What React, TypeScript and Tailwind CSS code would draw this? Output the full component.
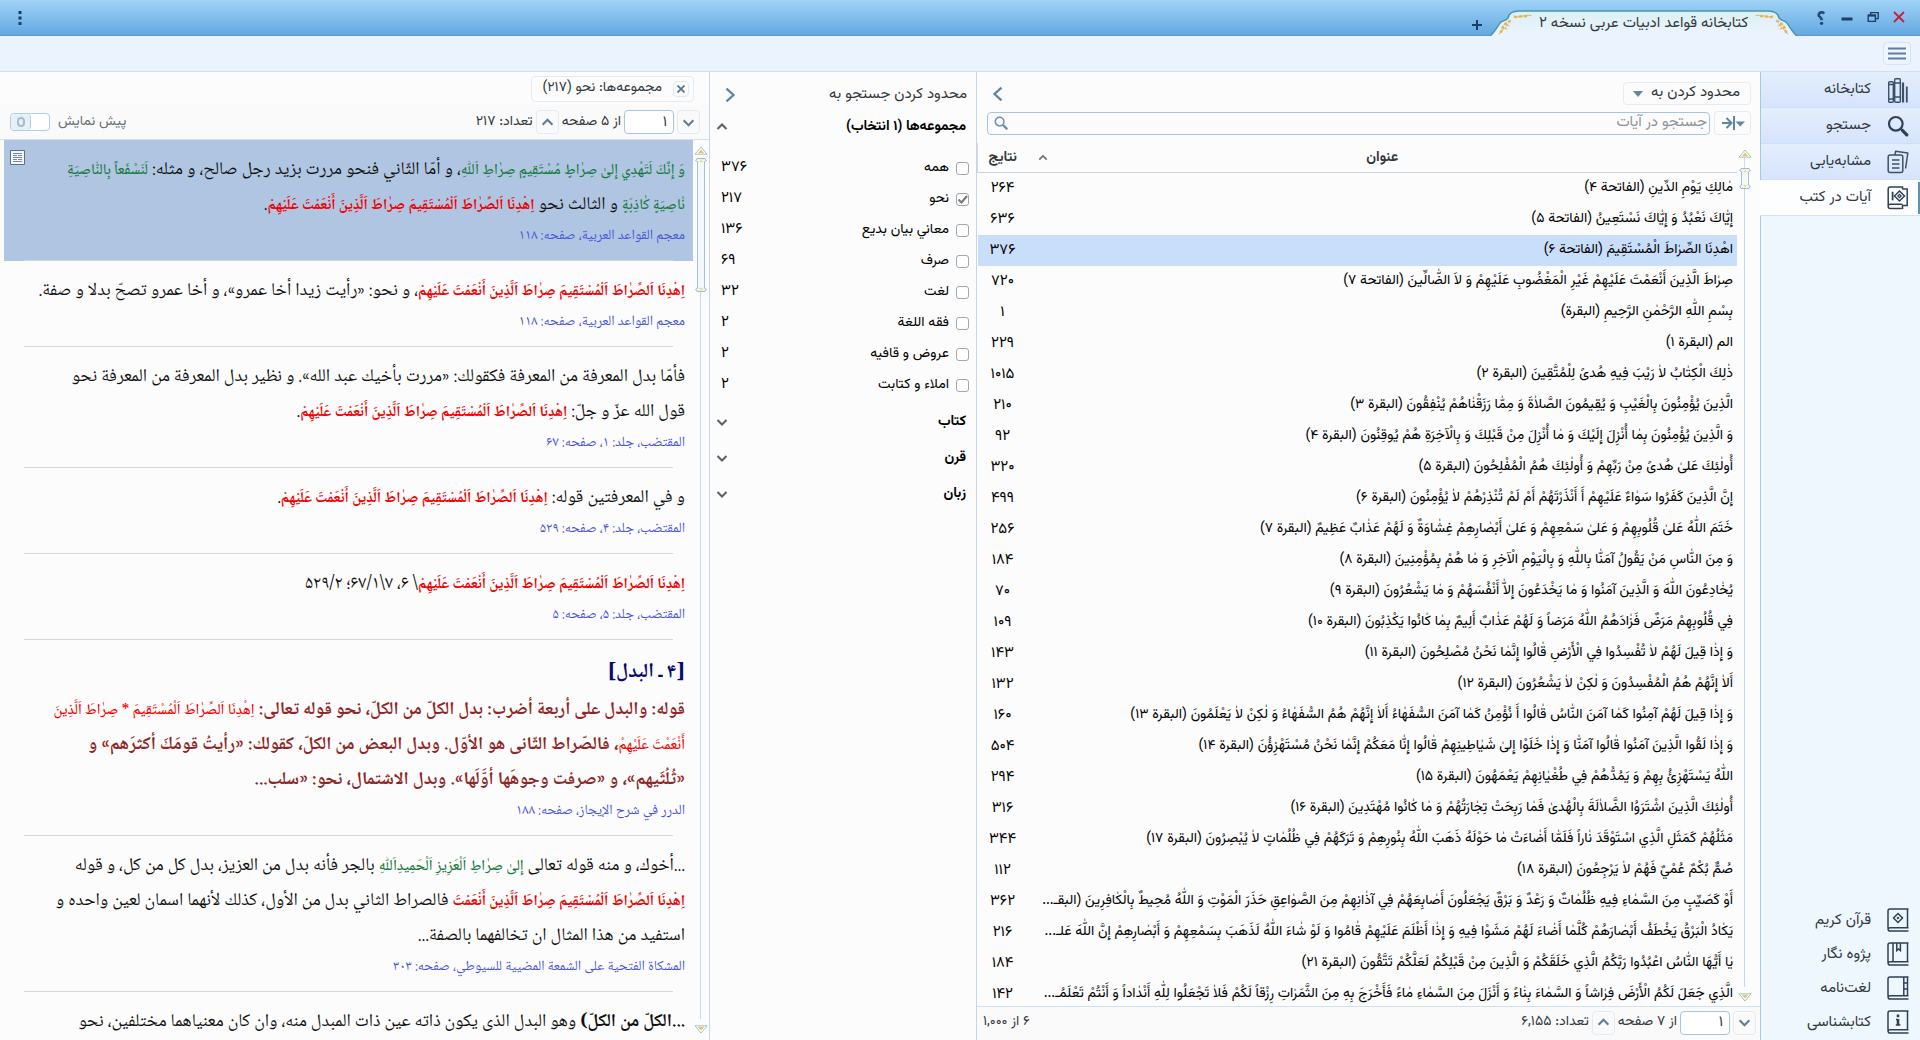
import React from 'react';

const FONT = "font-['Vazirmatn','Noto_Sans_Arabic','DejaVu_Sans',sans-serif]";
const NASKH = "font-['Noto_Naskh_Arabic','DejaVu_Sans',serif]";

type Part = { t: string; k?: 'red' | 'green' | 'bold' | 'redlight' };
type Line = { parts: Part[]; tone?: 'heading' | 'brown' };
type Result = { lines: Line[]; source: string; selected?: boolean };

const AYAH = 'اِهْدِنَا اَلصِّرٰاطَ اَلْمُسْتَقِيمَ صِرٰاطَ اَلَّذِينَ أَنْعَمْتَ عَلَيْهِمْ';

const results: Result[] = [
  {
    selected: true,
    lines: [
      {
        parts: [
          { t: 'وَ إِنَّكَ لَتَهْدِي إِلىٰ صِرٰاطٍ مُسْتَقِيمٍ صِرٰاطِ اَللّٰهِ', k: 'green' },
          { t: '، و أمّا الثّاني فنحو مررت بزيد رجل صالح، و مثله: ' },
          { t: 'لَنَسْفَعاً بِالنّٰاصِيَةِ', k: 'green' },
        ],
      },
      {
        parts: [
          { t: 'نٰاصِيَةٍ كٰاذِبَةٍ', k: 'green' },
          { t: ' و الثالث نحو ' },
          { t: AYAH, k: 'red' },
          { t: '.' },
        ],
      },
    ],
    source: 'معجم القواعد العربية، صفحه: ۱۱۸',
  },
  {
    lines: [
      {
        parts: [
          { t: AYAH, k: 'red' },
          { t: '، و نحو: «رأيت زيدا أخا عمرو»، و أخا عمرو تصحّ بدلا و صفة.' },
        ],
      },
    ],
    source: 'معجم القواعد العربية، صفحه: ۱۱۸',
  },
  {
    lines: [
      { parts: [{ t: 'فأمّا بدل المعرفة من المعرفة فكقولك: «مررت بأخيك عبد الله». و نظير بدل المعرفة من المعرفة نحو' }] },
      { parts: [{ t: 'قول الله عزّ و جلّ: ' }, { t: AYAH, k: 'red' }, { t: '.' }] },
    ],
    source: 'المقتضب، جلد: ۱، صفحه: ۶۷',
  },
  {
    lines: [{ parts: [{ t: 'و في المعرفتين قوله: ' }, { t: AYAH, k: 'red' }, { t: '.' }] }],
    source: 'المقتضب، جلد: ۴، صفحه: ۵۲۹',
  },
  {
    lines: [{ parts: [{ t: AYAH, k: 'red' }, { t: '\\ ۶، ۷\\۶۷/۱؛ ۵۲۹/۲' }] }],
    source: 'المقتضب، جلد: ۵، صفحه: ۵',
  },
  {
    lines: [
      { tone: 'heading', parts: [{ t: '[۴ ـ البدل]' }] },
      {
        tone: 'brown',
        parts: [
          { t: 'قوله: والبدل على أربعة أضرب: بدل الكلّ من الكلّ، نحو قوله تعالى: ' },
          { t: 'اِهْدِنَا اَلصِّرٰاطَ اَلْمُسْتَقِيمَ * صِرٰاطَ اَلَّذِينَ', k: 'redlight' },
        ],
      },
      {
        tone: 'brown',
        parts: [
          { t: 'أَنْعَمْتَ عَلَيْهِمْ', k: 'redlight' },
          { t: '، فالصّراط الثّانى هو الأوّل. وبدل البعض من الكلّ، كقولك: «رأيتُ قومَكَ أكثرَهم» و' },
        ],
      },
      {
        tone: 'brown',
        parts: [{ t: '«ثُلُثَيهم»، و «صرفت وجوهَها أوَّلَها». وبدل الاشتمال، نحو: «سلب...' }],
      },
    ],
    source: 'الدرر في شرح الإيجاز، صفحه: ۱۸۸',
  },
  {
    lines: [
      {
        parts: [
          { t: '...أخوك، و منه قوله تعالى ' },
          { t: 'إِلىٰ صِرٰاطِ اَلْعَزِيزِ اَلْحَمِيدِاَللّٰهِ', k: 'green' },
          { t: ' بالجر فأنه بدل من العزيز، بدل كل من كل، و قوله' },
        ],
      },
      {
        parts: [
          { t: 'اِهْدِنَا اَلصِّرٰاطَ اَلْمُسْتَقِيمَ صِرٰاطَ اَلَّذِينَ أَنْعَمْتَ', k: 'red' },
          { t: ' فالصراط الثاني بدل من الأول، كذلك لأنهما اسمان لعين واحده و' },
        ],
      },
      { parts: [{ t: 'استفيد من هذا المثال ان تخالفهما بالصفة...' }] },
    ],
    source: 'المشكاة الفتحية على الشمعة المضيية للسيوطي، صفحه: ۳۰۳',
  },
  {
    lines: [
      {
        parts: [
          { t: '...الكلّ من الكلّ)', k: 'bold' },
          { t: ' وهو البدل الذى يكون ذاته عين ذات المبدل منه، وان كان معنياهما مختلفين، نحو' },
        ],
      },
    ],
    source: '',
  },
];

const verses: [string, string][] = [
  ['مٰالِكِ يَوْمِ الدِّينِ (الفاتحة ۴)', '۲۶۴'],
  ['إِيّٰاكَ نَعْبُدُ وَ إِيّٰاكَ نَسْتَعِينُ (الفاتحة ۵)', '۶۳۶'],
  ['اهْدِنَا الصِّرٰاطَ الْمُسْتَقِيمَ (الفاتحة ۶)', '۳۷۶'],
  ['صِرٰاطَ الَّذِينَ أَنْعَمْتَ عَلَيْهِمْ غَيْرِ الْمَغْضُوبِ عَلَيْهِمْ وَ لاَ الضّٰالِّينَ (الفاتحة ۷)', '۷۲۰'],
  ['بِسْمِ اللّٰهِ الرَّحْمٰنِ الرَّحِيمِ (البقرة)', '۱'],
  ['الم (البقرة ۱)', '۲۲۹'],
  ['ذٰلِكَ الْكِتٰابُ لاٰ رَيْبَ فِيهِ هُدىً لِلْمُتَّقِينَ (البقرة ۲)', '۱۰۱۵'],
  ['الَّذِينَ يُؤْمِنُونَ بِالْغَيْبِ وَ يُقِيمُونَ الصَّلاٰةَ وَ مِمّٰا رَزَقْنٰاهُمْ يُنْفِقُونَ (البقرة ۳)', '۲۱۰'],
  ['وَ الَّذِينَ يُؤْمِنُونَ بِمٰا أُنْزِلَ إِلَيْكَ وَ مٰا أُنْزِلَ مِنْ قَبْلِكَ وَ بِالْآخِرَةِ هُمْ يُوقِنُونَ (البقرة ۴)', '۹۲'],
  ['أُولٰئِكَ عَلىٰ هُدىً مِنْ رَبِّهِمْ وَ أُولٰئِكَ هُمُ الْمُفْلِحُونَ (البقرة ۵)', '۳۲۰'],
  ['إِنَّ الَّذِينَ كَفَرُوا سَوٰاءٌ عَلَيْهِمْ أَ أَنْذَرْتَهُمْ أَمْ لَمْ تُنْذِرْهُمْ لاٰ يُؤْمِنُونَ (البقرة ۶)', '۴۹۹'],
  ['خَتَمَ اللّٰهُ عَلىٰ قُلُوبِهِمْ وَ عَلىٰ سَمْعِهِمْ وَ عَلىٰ أَبْصٰارِهِمْ غِشٰاوَةٌ وَ لَهُمْ عَذٰابٌ عَظِيمٌ (البقرة ۷)', '۲۵۶'],
  ['وَ مِنَ النّٰاسِ مَنْ يَقُولُ آمَنّٰا بِاللّٰهِ وَ بِالْيَوْمِ الْآخِرِ وَ مٰا هُمْ بِمُؤْمِنِينَ (البقرة ۸)', '۱۸۴'],
  ['يُخٰادِعُونَ اللّٰهَ وَ الَّذِينَ آمَنُوا وَ مٰا يَخْدَعُونَ إِلاّٰ أَنْفُسَهُمْ وَ مٰا يَشْعُرُونَ (البقرة ۹)', '۷۰'],
  ['فِي قُلُوبِهِمْ مَرَضٌ فَزٰادَهُمُ اللّٰهُ مَرَضاً وَ لَهُمْ عَذٰابٌ أَلِيمٌ بِمٰا كٰانُوا يَكْذِبُونَ (البقرة ۱۰)', '۱۰۹'],
  ['وَ إِذٰا قِيلَ لَهُمْ لاٰ تُفْسِدُوا فِي الْأَرْضِ قٰالُوا إِنَّمٰا نَحْنُ مُصْلِحُونَ (البقرة ۱۱)', '۱۴۳'],
  ['أَلاٰ إِنَّهُمْ هُمُ الْمُفْسِدُونَ وَ لٰكِنْ لاٰ يَشْعُرُونَ (البقرة ۱۲)', '۱۳۲'],
  ['وَ إِذٰا قِيلَ لَهُمْ آمِنُوا كَمٰا آمَنَ النّٰاسُ قٰالُوا أَ نُؤْمِنُ كَمٰا آمَنَ السُّفَهٰاءُ أَلاٰ إِنَّهُمْ هُمُ السُّفَهٰاءُ وَ لٰكِنْ لاٰ يَعْلَمُونَ (البقرة ۱۳)', '۱۶۰'],
  ['وَ إِذٰا لَقُوا الَّذِينَ آمَنُوا قٰالُوا آمَنّٰا وَ إِذٰا خَلَوْا إِلىٰ شَيٰاطِينِهِمْ قٰالُوا إِنّٰا مَعَكُمْ إِنَّمٰا نَحْنُ مُسْتَهْزِؤُنَ (البقرة ۱۴)', '۵۰۴'],
  ['اللّٰهُ يَسْتَهْزِئُ بِهِمْ وَ يَمُدُّهُمْ فِي طُغْيٰانِهِمْ يَعْمَهُونَ (البقرة ۱۵)', '۲۹۴'],
  ['أُولٰئِكَ الَّذِينَ اشْتَرَوُا الضَّلاٰلَةَ بِالْهُدىٰ فَمٰا رَبِحَتْ تِجٰارَتُهُمْ وَ مٰا كٰانُوا مُهْتَدِينَ (البقرة ۱۶)', '۳۱۶'],
  ['مَثَلُهُمْ كَمَثَلِ الَّذِي اسْتَوْقَدَ نٰاراً فَلَمّٰا أَضٰاءَتْ مٰا حَوْلَهُ ذَهَبَ اللّٰهُ بِنُورِهِمْ وَ تَرَكَهُمْ فِي ظُلُمٰاتٍ لاٰ يُبْصِرُونَ (البقرة ۱۷)', '۳۴۴'],
  ['صُمٌّ بُكْمٌ عُمْيٌ فَهُمْ لاٰ يَرْجِعُونَ (البقرة ۱۸)', '۱۱۲'],
  ['أَوْ كَصَيِّبٍ مِنَ السَّمٰاءِ فِيهِ ظُلُمٰاتٌ وَ رَعْدٌ وَ بَرْقٌ يَجْعَلُونَ أَصٰابِعَهُمْ فِي آذٰانِهِمْ مِنَ الصَّوٰاعِقِ حَذَرَ الْمَوْتِ وَ اللّٰهُ مُحِيطٌ بِالْكٰافِرِينَ (البقـ...', '۳۶۲'],
  ['يَكٰادُ الْبَرْقُ يَخْطَفُ أَبْصٰارَهُمْ كُلَّمٰا أَضٰاءَ لَهُمْ مَشَوْا فِيهِ وَ إِذٰا أَظْلَمَ عَلَيْهِمْ قٰامُوا وَ لَوْ شٰاءَ اللّٰهُ لَذَهَبَ بِسَمْعِهِمْ وَ أَبْصٰارِهِمْ إِنَّ اللّٰهَ عَلـ...', '۲۱۶'],
  ['يٰا أَيُّهَا النّٰاسُ اعْبُدُوا رَبَّكُمُ الَّذِي خَلَقَكُمْ وَ الَّذِينَ مِنْ قَبْلِكُمْ لَعَلَّكُمْ تَتَّقُونَ (البقرة ۲۱)', '۱۸۴'],
  ['الَّذِي جَعَلَ لَكُمُ الْأَرْضَ فِرٰاشاً وَ السَّمٰاءَ بِنٰاءً وَ أَنْزَلَ مِنَ السَّمٰاءِ مٰاءً فَأَخْرَجَ بِهِ مِنَ الثَّمَرٰاتِ رِزْقاً لَكُمْ فَلاٰ تَجْعَلُوا لِلّٰهِ أَنْدٰاداً وَ أَنْتُمْ تَعْلَمُـ...', '۱۴۲'],
];

const groups: [string, string, boolean][] = [
  ['همه', '۳۷۶', false],
  ['نحو', '۲۱۷', true],
  ['معاني بيان بديع', '۱۳۶', false],
  ['صرف', '۶۹', false],
  ['لغت', '۳۲', false],
  ['فقه اللغة', '۲', false],
  ['عروض و قافيه', '۲', false],
  ['املاء و كتابت', '۲', false],
];

function Chevron({ dir, className }: { dir: 'up' | 'down' | 'left' | 'right'; className?: string }) {
  const d = {
    up: 'M1.5 8 6 3.5 10.5 8',
    down: 'M1.5 4 6 8.5 10.5 4',
    left: 'M9 0.5 3 6 9 11.5',
    right: 'M3 0.5 9 6 3 11.5',
  }[dir];
  return (
    <svg viewBox="0 0 12 12" className={className ?? 'size-3'} fill="none" stroke="currentColor" strokeWidth="2" aria-hidden="true">
      <path d={d} />
    </svg>
  );
}

function BooksIcon() {
  return (
    <svg viewBox="0 0 22 26" className="h-[26px] w-[22px]" fill="none" stroke="#3d5266" strokeWidth="1.4" aria-hidden="true">
      <rect x="1.7" y="4.7" width="4.6" height="20.6" rx="1" />
      <path d="M1.7 7.5h4.6M1.7 22h4.6" />
      <rect x="7.7" y="1.7" width="5.6" height="23.6" rx="1" />
      <path d="M7.7 6h5.6M7.7 20h5.6" />
      <path d="M16 5.5v20" strokeWidth="2.2" />
      <path d="M19.8 9.5v16" strokeWidth="1.8" />
    </svg>
  );
}

function MagnifierIcon({ className, w }: { className: string; w: number }) {
  return (
    <svg viewBox="0 0 22 22" className={className} fill="none" stroke="currentColor" strokeWidth={w} aria-hidden="true">
      <circle cx="8.8" cy="8.8" r="6.8" />
      <path d="m13.6 13.6 2 2" />
      <path d="m15.6 15.6 4.2 4.2" strokeWidth={w * 1.5} strokeLinecap="round" />
    </svg>
  );
}

function PagesIcon() {
  return (
    <svg viewBox="0 0 22 24" className="h-6 w-[22px]" fill="none" stroke="#3d5266" strokeWidth="1.5" strokeLinejoin="round" aria-hidden="true">
      <rect x="1.2" y="5" width="14.6" height="17.6" rx="2" />
      <path d="M5 10h7.5M5 14h7.5M5 18h7.5" />
      <path d="M8 5 8.6 1.2 20.8 3 18.6 18.5" />
    </svg>
  );
}

function AyahBooksIcon() {
  return (
    <svg viewBox="0 0 22 24" className="h-6 w-[22px]" fill="none" stroke="#2f4255" strokeWidth="1.5" aria-hidden="true">
      <path d="M15.5 3.5V1H3.2C1.9 1 1.2 1.8 1.2 3v17.5c0 1.2.8 2 2 2h11.6M1.4 19.5c.2-.8.9-1.3 1.8-1.3h12.3" />
      <path d="M16 3h4.2v16.5H15.5v3.5" />
      <path d="M5.6 5.8v8.5" strokeWidth="1.8" />
      <path d="M12.5 5 17.5 10l-5 5-5-5z" />
      <path d="m12.5 8.3 1.7 1.7-1.7 1.7-1.7-1.7z" strokeWidth="1.2" />
    </svg>
  );
}

function BookShell({ children }: { children: React.ReactNode }) {
  return (
    <svg viewBox="0 0 22 24" className="h-6 w-[22px]" fill="none" stroke="#2f4255" strokeWidth="1.5" aria-hidden="true">
      <path d="M21.5 1H3C1.8 1 1 1.8 1 3v17.4C1 21.8 1.9 23 3.2 23h18.3M20.5 1v18.7M21.5 19.7H3.2C2 19.7 1.2 20.3 1 21" />
      {children}
    </svg>
  );
}

const tools = [
  { label: 'كتابخانه', icon: <BooksIcon /> },
  { label: 'جستجو', icon: <MagnifierIcon className="size-[22px] text-[#2f4255]" w={2.2} /> },
  { label: 'مشابه‌يابى', icon: <PagesIcon /> },
  { label: 'آيات در كتب', icon: <AyahBooksIcon />, active: true },
];

const books = [
  {
    label: 'قرآن كريم',
    icon: (
      <BookShell>
        <path d="M11 5.5 15.5 10 11 14.5 6.5 10z" />
        <path d="m11 8.9 1.1 1.1-1.1 1.1L9.9 10z" strokeWidth="1" />
      </BookShell>
    ),
  },
  {
    label: 'پژوه نگار',
    icon: (
      <BookShell>
        <path d="M6 1v18.5M9.8 1v7.5l1.8-1.6 1.8 1.6V1" />
      </BookShell>
    ),
  },
  {
    label: 'لغت‌نامه',
    icon: (
      <BookShell>
        <path d="M16.8 1v18.5M16.8 7h4M16.8 13h4" />
      </BookShell>
    ),
  },
  {
    label: 'كتابشناسى',
    icon: (
      <BookShell>
        <path d="M11 4.6v2.6M11 9v6" strokeWidth="2.6" />
        <path d="M9 9.4h2M8.8 15h4.6" />
      </BookShell>
    ),
  },
];

function ScrollArrow({ down }: { down?: boolean }) {
  return (
    <svg viewBox="0 0 14 9" className={down ? 'h-[9px] w-[14px] shrink-0 rotate-180' : 'h-[9px] w-[14px] shrink-0'} aria-hidden="true">
      <path d="M7 1 13 8.2H1z" fill="#fff" stroke="#9cc9b4" />
      <path d="M7 3.6 10.2 7.2H3.8z" fill="#f0bd70" />
    </svg>
  );
}

function ThumbCap({ bottom }: { bottom?: boolean }) {
  return (
    <svg
      viewBox="0 0 12 5"
      className={bottom ? 'h-[5px] w-3 shrink-0 rotate-180' : 'h-[5px] w-3 shrink-0'}
      fill="#f3f8e6"
      stroke="#9ab3d8"
      aria-hidden="true"
    >
      <path d="M2.5 5V3.8L.6 2.6 2 .6h8l1.4 2-1.9 1.2V5" />
      <path d="M6 1.4 8 4H4z" fill="#d5e58c" stroke="none" />
    </svg>
  );
}

function ScrollRail({ tall }: { tall?: boolean }) {
  return (
    <div className="flex h-full flex-col items-center">
      <ScrollArrow />
      <div className={tall ? 'h-[3px] w-px shrink-0' : 'h-2.5 w-px shrink-0 bg-[#c9dbf0]'} />
      <div className={tall ? 'flex h-[134px] w-3 shrink-0 flex-col items-center' : 'flex h-[21px] w-3 shrink-0 flex-col items-center'}>
        <ThumbCap />
        <div className="w-2 flex-1 border-x border-[#a6c0e2] bg-[#f4f8fd]" />
        <ThumbCap bottom />
      </div>
      <div className="w-px flex-1 bg-[#c3d8f0]" />
      <div className="h-1.5" />
      <ScrollArrow down />
    </div>
  );
}

function Pager({ id, pages, total }: { id: string; pages: string; total: string }) {
  const box = 'flex h-6 w-[23px] items-center justify-center rounded border border-[#e3ebf4] text-[#5f7f99]';
  return (
    <div className="flex items-center gap-[3px] text-[15px] text-[#33383d]">
      <button aria-label="صفحه بعد" className={box}>
        <Chevron dir="down" className="size-[13px]" />
      </button>
      <input
        aria-label="شماره صفحه"
        id={id}
        defaultValue="۱"
        className="h-6 w-[50px] rounded border border-[#a9c5dc] bg-white px-1.5 text-right"
      />
      <label htmlFor={id} className="text-[14px] whitespace-nowrap">
        از {pages} صفحه
      </label>
      <button aria-label="صفحه قبل" className={box}>
        <Chevron dir="up" className="size-[13px]" />
      </button>
      <span className="text-[14px] whitespace-nowrap">تعداد: {total}</span>
    </div>
  );
}

function TitleBar() {
  const winBtn = 'flex h-[34px] w-[26px] items-center justify-center text-[#1d4a72]';
  return (
    <header className="flex h-9 shrink-0 items-stretch border-b border-[#5a98d2] bg-linear-to-b from-[#a0d3f7] to-[#63a8e2] pr-2 pl-[14px]">
      <button aria-label="بستن" className={winBtn}>
        <svg viewBox="0 0 12 12" className="size-3" stroke="#c5203a" strokeWidth="1.8" aria-hidden="true">
          <path d="m1 1 10 10M11 1 1 11" />
        </svg>
      </button>
      <button aria-label="بازگرداندن" className={winBtn}>
        <svg viewBox="0 0 12 12" className="size-3" fill="none" stroke="#1d3f66" strokeWidth="1.4" aria-hidden="true">
          <path d="M1.2 4.2h7.2v6.2H1.2z" />
          <path d="M1 4.6h7.6" strokeWidth="2" />
          <path d="M3.6 4V1.6h7.6v6H8.6" />
        </svg>
      </button>
      <button aria-label="کمینه" className={winBtn}>
        <svg viewBox="0 0 12 12" className="size-3" stroke="#1d3f66" strokeWidth="3" aria-hidden="true">
          <path d="M.5 8h11" />
        </svg>
      </button>
      <button aria-label="راهنما" className={winBtn + ' pt-1.5 text-[20px] font-bold'}>
        ؟
      </button>
      <div className="relative mr-[11px] flex w-[307px] items-end justify-center">
        <svg viewBox="0 0 307 26" preserveAspectRatio="none" className="absolute inset-x-0 -bottom-px h-[26px] w-full" aria-hidden="true">
          <defs>
            <linearGradient id="tab" x1="0" y1="0" x2="0" y2="1">
              <stop offset="0" stopColor="#dcf0f3" />
              <stop offset="1" stopColor="#ecf4fe" />
            </linearGradient>
          </defs>
          <path
            d="M0 26C5 22 8 15 11 12c3-1.5 5-1.5 7-4 1-5 6-7 11-7h249c5 0 10 2 11 7 2 2.500 4 2.500 7 4 3 3 6 10 11 14z"
            fill="url(#tab)"
          />
          <path
            d="M0 26C5 22 8 15 11 12c3-1.500 5-1.500 7-4 1-5 6-7 11-7h249c5 0 10 2 11 7 2 2.500 4 2.500 7 4 3 3 6 10 11 14"
            fill="none"
            stroke="#4a96a6"
            strokeWidth="1.500"
          />
          <g fill="none" stroke="#e3b45e" strokeLinecap="round">
            <path d="M11 22c1-5 4-9 9-11" strokeWidth="2.500" strokeDasharray="1 3.500" />
            <path d="M9 24c3-4 7-6 9-10M12 18l5 1M15 14l4 2" strokeWidth="1" />
            <path d="M25 7l13-1" strokeWidth="2.500" strokeDasharray="1 4" />
            <path d="M24 6c5 3 10-2 17-.5" strokeWidth="1" />
            <path d="M296 22c-1-5-4-9-9-11" strokeWidth="2.500" strokeDasharray="1 3.500" />
            <path d="M298 24c-3-4-7-6-9-10M295 18l-5 1M292 14l-4 2" strokeWidth="1" />
            <path d="M282 7l-13-1" strokeWidth="2.500" strokeDasharray="1 4" />
            <path d="M283 6c-5 3-10-2-17-.5" strokeWidth="1" />
          </g>
        </svg>
        <h1 className="relative h-6 text-[15px] leading-[26px] whitespace-nowrap text-[#33383d]">كتابخانه قواعد ادبيات عربى نسخه ۲</h1>
      </div>
      <button aria-label="زبانه جدید" className="flex w-[26px] items-end justify-center pb-[5px] text-[#1d3f66]">
        <svg viewBox="0 0 10 10" className="size-2.5" stroke="currentColor" strokeWidth="2" aria-hidden="true">
          <path d="M5 0v10M0 5h10" />
        </svg>
      </button>
      <div className="flex-1" />
      <button aria-label="گزینه‌ها" className="flex w-3 items-center justify-center text-[#1d3f66]">
        <svg viewBox="0 0 4 14" className="h-[14px] w-1" fill="currentColor" aria-hidden="true">
          <path d="M.5 0h3v3h-3zM.5 5.500h3v3h-3zM.5 11h3v3h-3z" />
        </svg>
      </button>
    </header>
  );
}

function Sidebar() {
  return (
    <nav className="flex w-40 shrink-0 flex-col border-l border-[#a9c8dc] bg-[#eef7fe] text-[15px] text-[#33383d]">
      {tools.map((t) => (
        <button
          key={t.label}
          className={
            t.active
              ? 'relative -ml-px flex h-9 items-center gap-4 border-b border-[#d3e1f2] bg-[#fdfeff] pr-[11px] text-right'
              : 'flex h-9 items-center gap-4 border-b border-[#cddffa] bg-linear-to-b from-[#e3eefd] to-[#d6e4fc] pr-[11px] text-right'
          }
        >
          {t.active && <span className="absolute top-0.5 right-0 h-8 w-0.5 bg-[#5d92b5]" />}
          <span className="flex w-[22px] justify-center">{t.icon}</span>
          <span className="pt-0.5">{t.label}</span>
        </button>
      ))}
      <div className="flex-1" />
      {books.map((b) => (
        <button key={b.label} className="flex h-[34px] items-center gap-4 pr-[11px] text-right">
          <span className="flex w-[22px] justify-center">{b.icon}</span>
          <span className="pt-0.5">{b.label}</span>
        </button>
      ))}
      <div className="h-px" />
    </nav>
  );
}

function VerseList() {
  return (
    <section className="flex min-w-0 flex-1 flex-col border-l border-[#c6d6e8]">
      <div className="flex h-[39px] shrink-0 items-center justify-between pt-1 pr-[9px] pl-[14px]">
        <button className="flex h-[23px] w-32 items-center justify-between rounded border border-[#e6ecf3] pr-2.5 pl-[9px] text-[15px] text-[#33383d]">
          <span>محدود كردن به</span>
          <svg viewBox="0 0 10 6" className="h-1.5 w-2.5" fill="#5f86a5" aria-hidden="true">
            <path d="M0 0h10L5 6z" />
          </svg>
        </button>
        <button aria-label="بستن پنل" className="text-[#5f86a5]">
          <Chevron dir="left" className="size-[14px]" />
        </button>
      </div>
      <div className="flex h-6 shrink-0 items-center gap-1 pr-[9px] pl-[10px]">
        <button aria-label="پرش" className="flex h-6 w-[37px] shrink-0 items-center justify-center rounded border border-[#e6ecf3] text-[#5f86a5]">
          <svg viewBox="0 0 24 14" className="h-[14px] w-6" fill="none" stroke="currentColor" strokeWidth="2" aria-hidden="true">
            <path d="M1 7h9M5.500 2l5 5-5 5M13 0v14" />
            <path d="M14.500 5.500H24l-4.700 5z" fill="currentColor" stroke="none" />
          </svg>
        </button>
        <div className="flex h-[23px] flex-1 items-center rounded border border-[#a9c5dc] bg-[#fbfbfb] pl-1.5">
          <input
            type="search"
            aria-label="جستجو در آیات"
            placeholder="جستجو در آيات"
            className="min-w-0 flex-1 bg-transparent pr-0.5 text-[15px] outline-none placeholder:text-[#8d9399]"
          />
          <MagnifierIcon className="size-[14px] text-[#6d8fab]" w={2.4} />
        </div>
      </div>
      <div className="mt-2 flex min-h-0 flex-1">
        <div className="w-[23px] shrink-0 pt-1.5 pr-2 pb-1">
          <ScrollRail />
        </div>
        <div className="min-w-0 flex-1 overflow-hidden">
          <table className="w-full table-fixed border-collapse text-[15px] text-black">
            <thead>
              <tr className="h-[29px] border-b border-[#cbd3de] text-[14px] text-[#33383d]">
                <th className="relative pt-0.5 pb-0 leading-6 font-bold">
                  عنوان
                  <Chevron dir="up" className="absolute top-2.5 left-2.5 size-2.5 text-[#6b7177]" />
                </th>
                <th className="w-[50px] border-l border-[#d5dae2] pt-0.5 pb-0 leading-6 font-bold">نتايج</th>
              </tr>
            </thead>
            <tbody>
              {verses.map(([text, count], i) => (
                <tr key={i} className={i === 2 ? 'h-[31px] bg-[#c9defb]' : 'h-[31px]'}>
                  <td className="overflow-hidden py-0 pr-1 text-[14px] leading-[31px] whitespace-nowrap">{text}</td>
                  <td className="py-0 text-center leading-[31px]">{count}</td>
                </tr>
              ))}
            </tbody>
          </table>
        </div>
      </div>
      <footer className="flex h-[34px] shrink-0 items-center justify-between border-t border-[#cfe0f0] bg-[#fafafa] pr-1 pb-0.5 pl-1.5">
        <Pager id="verse-page" pages="۷" total="۶,۱۵۵" />
        <span className="text-[14px] text-[#33383d]">۶ از ۱,۰۰۰</span>
      </footer>
    </section>
  );
}

function Filters() {
  return (
    <aside className="flex w-[267px] shrink-0 flex-col border-l border-[#c6d6e8] text-[15px] text-black">
      <div className="mt-[5px] flex h-9 items-center justify-between pr-[9px] pl-[13px] text-[#33383d]">
        <span>محدود كردن جستجو به</span>
        <button aria-label="باز کردن پنل" className="text-[#5f86a5]">
          <Chevron dir="right" className="size-[14px]" />
        </button>
      </div>
      <button className="flex h-7 items-center justify-between pr-2.5 pl-1.5 text-[14px] font-bold">
        <span>مجموعه‌ها (۱ انتخاب)</span>
        <Chevron dir="up" className="size-3 text-[#5b6168]" />
      </button>
      <ul className="pt-3">
        {groups.map(([label, count, on]) => (
          <li key={label} className="flex h-[31px] items-center justify-between pr-[7px] pl-[11px]">
            <label className="flex items-center gap-[7px]">
              <span className="relative flex size-[13px]">
                <input type="checkbox" defaultChecked={on} className="size-[13px] appearance-none rounded-[3px] border border-[#a3a6aa] bg-white" />
                {on && (
                  <svg viewBox="0 0 13 13" className="pointer-events-none absolute inset-0 size-[13px]" fill="none" stroke="#777" strokeWidth="2" aria-hidden="true">
                    <path d="m2.500 6.500 3 3L11 3" />
                  </svg>
                )}
              </span>
              <span className="text-[14px]">{label}</span>
            </label>
            <span>{count}</span>
          </li>
        ))}
      </ul>
      <div className="pt-[3px]">
        {['كتاب', 'قرن', 'زبان'].map((s) => (
          <button key={s} className="flex h-9 w-full items-center justify-between pr-2.5 pl-1.5 text-[14px] font-bold">
            <span>{s}</span>
            <Chevron dir="down" className="size-3 text-[#5b6168]" />
          </button>
        ))}
      </div>
    </aside>
  );
}

const partClass = {
  red: 'text-[15px] font-bold text-[#f00000]',
  redlight: 'text-[15px] font-medium text-[#f00000]',
  green: 'text-[15px] font-medium text-[#147a3d]',
  bold: 'font-bold',
};

const lineClass = {
  heading: 'h-10 text-[20px] leading-10 font-bold whitespace-nowrap text-[#0a0a6e]',
  brown: 'h-[35px] text-[18px] leading-[35px] font-bold whitespace-nowrap text-[#8f2626]',
  plain: 'h-[35px] text-[18px] leading-[35px] whitespace-nowrap text-[#111]',
};

function ResultItem({ r }: { r: Result }) {
  return (
    <article className={r.selected ? 'relative bg-[#b0c5e1]' : 'relative'}>
      {r.selected && (
        <button aria-label="نمایش متن" className="absolute top-2.5 left-1.5">
          <svg viewBox="0 0 15 15" className="size-[15px]" aria-hidden="true">
            <path d="M.5.5h14v14H.5z" fill="#f4f6f9" stroke="#5c6f85" />
            <path d="M3 3.500h9M3 5.500h4M8 5.500h4M3 7.500h9M3 9.500h4M8 9.500h4M3 11.500h9" stroke="#7486a0" />
          </svg>
        </button>
      )}
      <div className="px-2 pt-[13px] pb-[11px]">
        {r.lines.map((l, i) => (
          <p key={i} className={lineClass[l.tone ?? 'plain']}>
            {l.parts.map((p, j) => (
              <span key={j} className={p.k ? partClass[p.k] : undefined}>
                {p.t}
              </span>
            ))}
          </p>
        ))}
        {r.source && (
          <a href="#source" className="block h-[26px] text-[14px] leading-[26px] whitespace-nowrap text-[#4653dc]">
            {r.source}
          </a>
        )}
      </div>
      {r.source && <div className="mx-5 h-px bg-[#d3d8e0]" />}
    </article>
  );
}

function Results() {
  return (
    <main className="flex w-[709px] shrink-0 flex-col">
      <div className="flex h-[33px] shrink-0 items-center pr-[15px]">
        <div className="flex h-[26px] items-center gap-[11px] rounded border border-[#e3ebf4] pr-1 pl-2.5 text-[14px] text-[#33383d]">
          <button aria-label="حذف فیلتر" className="flex size-4 items-center justify-center rounded border border-[#dfe9f3]">
            <svg viewBox="0 0 8 8" className="size-2" stroke="#4f7390" strokeWidth="1.700" aria-hidden="true">
              <path d="m.5.5 7 7M7.500.5l-7 7" />
            </svg>
          </button>
          <span>مجموعه‌ها: نحو (۲۱۷)</span>
        </div>
      </div>
      <div className="flex h-[35px] shrink-0 items-center justify-between border-b border-[#d3dfee] bg-[#fafafa] pr-[9px] pl-2.5">
        <Pager id="result-page" pages="۵" total="۲۱۷" />
        <label className="flex items-center gap-2 text-[14px] text-[#6b7177]">
          پيش نمايش
          <button role="switch" aria-checked="false" aria-label="پیش نمایش" className="flex h-[18px] w-10 justify-end rounded border border-[#b5cde0] bg-white">
            <span className="flex h-4 w-5 items-center justify-center rounded border-r border-[#b5cde0] bg-[#e6f0f8]">
              <span className="h-2.5 w-2 rounded-full border-2 border-[#a9bccd]" />
            </span>
          </button>
        </label>
      </div>
      <div className="flex min-h-0 flex-1">
        <div className="w-4 shrink-0 pt-1.5 pr-px pb-1.5">
          <ScrollRail tall />
        </div>
        <div className={'min-w-0 flex-1 overflow-hidden pl-1 ' + NASKH}>
          {results.map((r, i) => (
            <ResultItem key={i} r={r} />
          ))}
        </div>
      </div>
    </main>
  );
}

export default function App() {
  return (
    <div dir="rtl" lang="fa" className={'flex h-screen flex-col overflow-hidden bg-[#fcfcfc] ' + FONT}>
      <TitleBar />
      <div className="flex h-9 shrink-0 items-center border-b border-[#cfdff0] bg-[#eaf3fe] pr-[9px]">
        <button aria-label="منو" className="flex h-[23px] w-7 items-center justify-center rounded border border-[#d6e3f3] bg-[#eef5fe]">
          <svg viewBox="0 0 18 13" className="h-[13px] w-[18px]" stroke="#5b7f9e" strokeWidth="2" aria-hidden="true">
            <path d="M0 1.500h18M0 6.500h18M0 11.500h18" />
          </svg>
        </button>
      </div>
      <div className="flex min-h-0 flex-1">
        <Sidebar />
        <VerseList />
        <Filters />
        <Results />
      </div>
    </div>
  );
}
